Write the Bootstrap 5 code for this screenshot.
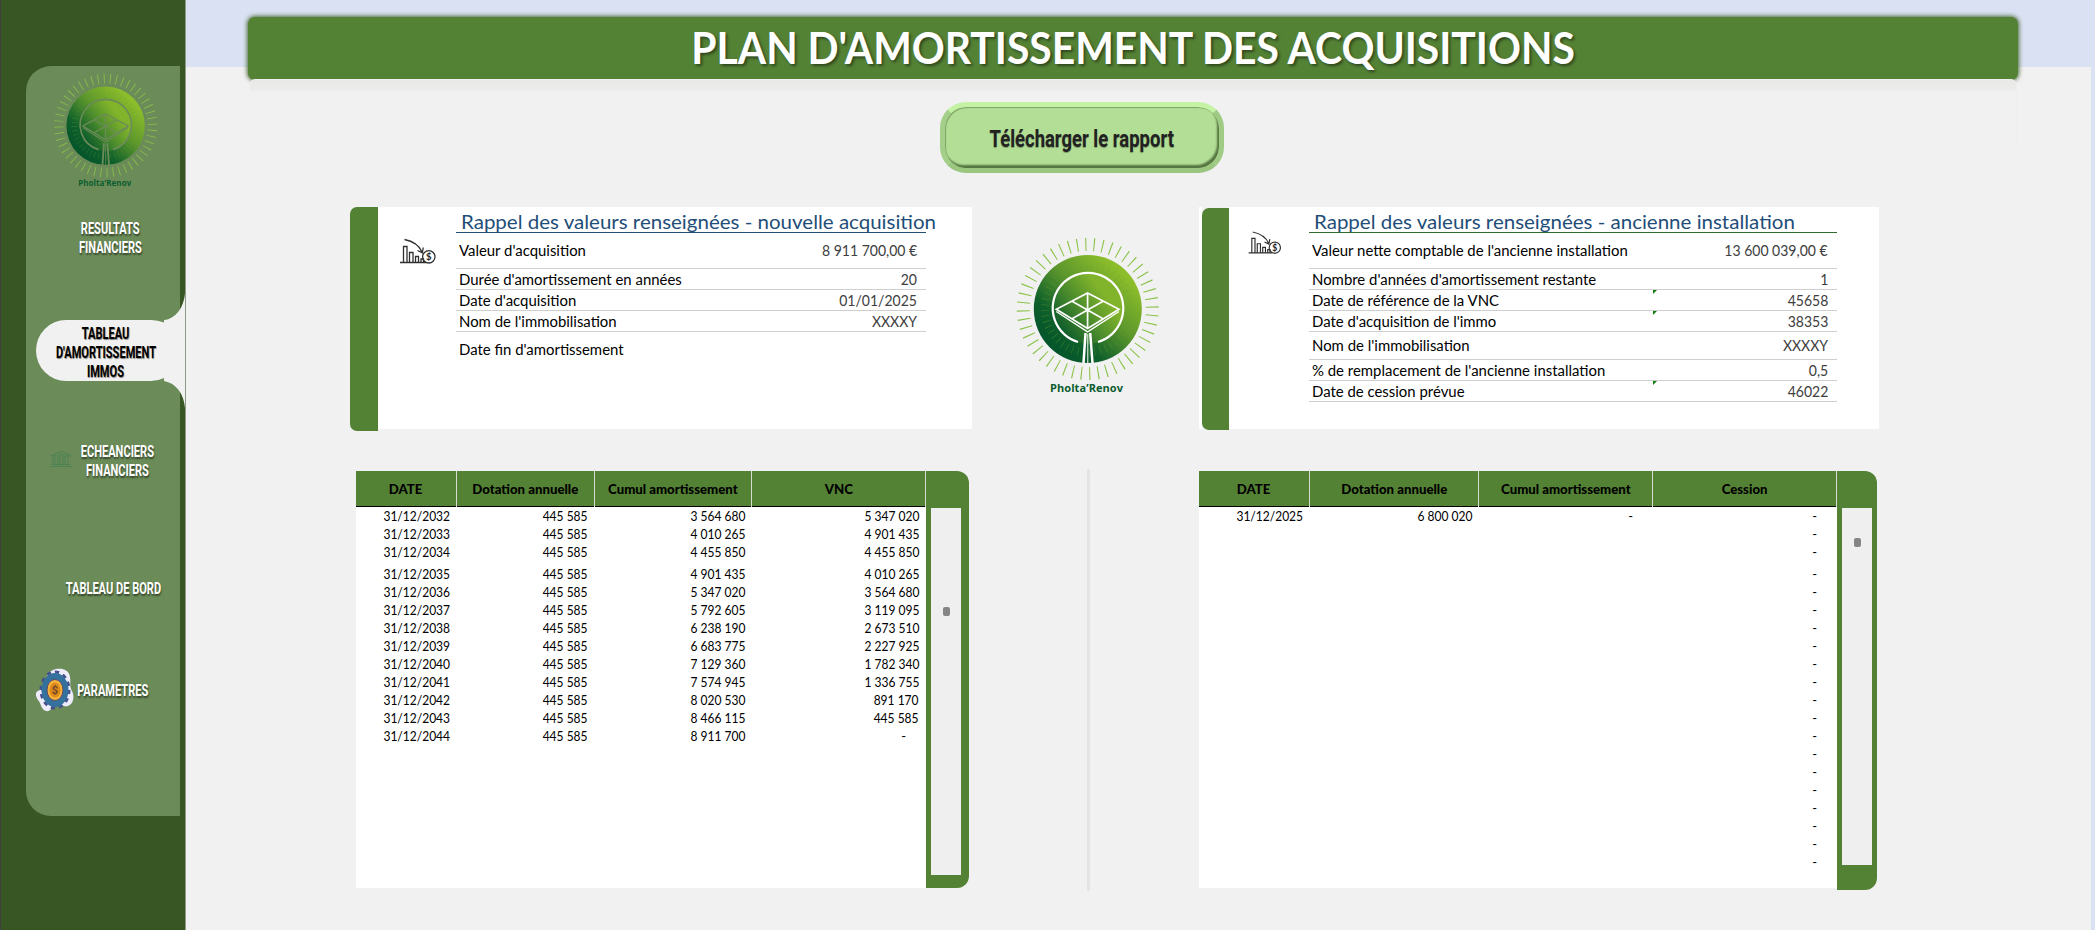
<!DOCTYPE html>
<html lang="fr">
<head>
<meta charset="utf-8">
<title>Plan d'amortissement des acquisitions</title>
<meta name="viewport" content="width=device-width, initial-scale=1">
<link href="https://cdn.jsdelivr.net/npm/bootstrap@5.3.0/dist/css/bootstrap.min.css" rel="stylesheet">
<style>
:root{--green:#548235;--deep:#375623;--soft:#6b8c58;--paper:#f1f1f1;--sky:#d9e1f2}
body{width:2095px;height:930px;overflow:hidden;font-family:Lato,"Open Sans",sans-serif;color:#000;background:var(--paper)}
.fit{display:inline-block;white-space:nowrap;transform:scaleX(var(--k,1));transform-origin:var(--o,0) 50%}
.side{width:186px;height:930px;background:var(--deep);border-left:1px solid #404040;border-right:1px solid #8f9a88;padding:66px 0 0 25px}
.side-panel{width:159px;height:750px;background:linear-gradient(to right,var(--soft) 154px,transparent 154px);border-radius:25px 0 0 25px;color:#fff;font-family:Roboto,sans-serif;font-weight:700}
.entry{height:19px;line-height:19px;font-size:17px;text-shadow:1px 2px 2px rgba(0,0,0,.5);text-align:center;--k:.65;--o:50%}
.entry .fit{margin:0 -60px}
.tab{width:149px;height:115px;margin:36px 0 0 10px;color:#000;padding-top:31px}
.tab .entry{text-shadow:1px 1px 1px rgba(0,0,0,.45)}
.tab-shape{left:0;top:0}
.board{width:1909px;height:930px;background:linear-gradient(var(--sky) 67px,var(--paper) 67px);border-right:4px solid var(--sky);padding-top:17px}
.banner{width:1770px;height:63px;margin-left:62px;background:var(--green);border-radius:7px;box-shadow:0 0 4px 1px #4f6b3c;color:#fff;font-size:43px;font-weight:700;line-height:62px;text-shadow:2px 2px 3px rgba(0,0,0,.45);--o:50%;--k:.95}
.echo{width:1768px;height:70px;margin:-1px 0 -70px 63px;border-radius:6px;background:linear-gradient(#e9e9e7 0,#ebebe9 9px,#f1f1f1 12px);border:1px solid #efefef}
.report{width:284px;height:71px;margin:23px 0 0 754px;border-radius:26px;border:5px solid;border-color:#c4f3a6 #9fcb84 #9bc680 #a3cf88;background:#b2de95;box-shadow:inset -2px -3px 2px #557540,inset 1px 1px 1px #7da263;font:700 24px/64px Roboto,sans-serif;color:#222;--o:50%;--k:.77;text-shadow:0 1px 1px rgba(0,0,0,.3);padding:0}
.report .fit{height:61px}
.cards{margin:34px 0 0 164px;height:224px}
.stripe{background:var(--green);border-radius:7px 0 0 7px}
.sheet{height:222px;background:#fff}
.recap-title{font-size:20px;height:26px;line-height:28px;color:#1f4e79;padding-left:5px;border-bottom:1px solid #1f4e79;--k:1.025}
.recap-title .fit{width:0;height:24px}
.line{height:21px;font-size:14.6px;line-height:22px;border-bottom:1px solid #cfcfcf;padding:0 9px 0 3px;--k:1.022}
.line.tall{height:36px;line-height:36px}
.line.mid{height:28px;line-height:28px}
.line span:last-child{color:#404040}
.line .r{--o:100%;--k:.96}
.flag::before{content:"";position:absolute;left:344px;top:0;border-top:4px solid #107c10;border-right:4px solid transparent}
.grids{margin:40px 0 0 170px;height:420px}
.ledger{height:417px;background:#fff;font-size:13px}
.ledger .h{height:36px;line-height:36px;background:var(--green);border-bottom:1px solid #000;font-weight:700;text-align:center}
.ledger .h>span{border-right:1px solid #d5dccf;--o:50%;--k:1.015}
.ledger .row-l{height:18px;line-height:18px;text-align:right;--o:100%;--k:.925}
.ledger .row-l.gap{height:22px;padding-top:4px}
.c4{display:grid;grid-template-columns:101px 138px 157px 174px}
.c4.b{grid-template-columns:111px 169px 174px 184px}
.c4>span{padding-right:7px}
.h>span{padding-right:0!important}
.dash{display:inline-block;width:5px;margin-right:13px}
#oldLedger .dash{margin-right:13px}
.rail{background:var(--green);border-radius:0 12px 12px 0;padding:37px 0 0 5px}
.track{width:30px;background:#efefef}
.thumb{width:7px;height:9px;border-radius:2px;background:#858585;margin-left:12px}
.split{width:3px;height:422px;background:#e4e4e4;margin:-2px 0 0 118px}
.brand{font:700 11px "Open Sans",sans-serif}
</style>
</head>
<body class="d-flex">
<svg width="0" height="0" class="position-absolute">
<defs>
<linearGradient id="leaf" x1=".15" y1=".85" x2=".8" y2=".15"><stop offset="0" stop-color="#03552b"/><stop offset=".25" stop-color="#0f602b"/><stop offset=".6" stop-color="#5b962c"/><stop offset="1" stop-color="#8cbd2b"/></linearGradient>
<linearGradient id="leaf2" x1=".1" y1=".8" x2=".75" y2=".3"><stop offset="0" stop-color="#0a5a2b"/><stop offset=".5" stop-color="#4b8b2c"/><stop offset="1" stop-color="#82b42b"/></linearGradient>
<symbol id="logo" viewBox="0 0 180 190">
<circle cx="88.8" cy="89" r="64.500" fill="none" stroke="#8bc34a" stroke-width="13" pathLength="480" stroke-dasharray="1.3 8.7" stroke-dashoffset="3"/>
<circle cx="88.8" cy="89" r="54" fill="url(#leaf)"/>
<circle cx="88.8" cy="89" r="43" fill="none" stroke="#6fa52e" stroke-opacity=".5" stroke-width="8" pathLength="480" stroke-dasharray="1 9" stroke-dashoffset="3"/>
<circle cx="88.8" cy="89" r="35" fill="url(#leaf2)"/>
<g fill="none" stroke="currentColor">
<path d="M79 122A35.3 35.3 0 1 1 99 122" stroke-width="2.2"/>
<path d="M88.6 73L120 89.3 88.6 108.5 57.3 89.3ZM72.6 81L104 98.800M104.500 81L73 98.800M88.600 73V108" stroke-width="1.7"/>
<path d="M57.300 91.500L88.600 111.800 120 91.500" stroke-width="1.400"/>
<path d="M86.500 113L84.500 143M91.200 113L93.500 143" stroke-width="2.500"/>
<path d="M88.800 114V143" stroke-width="1"/>
</g>
<text x="87.500" y="171.500" text-anchor="middle" class="brand" fill="#0b5c2e" textLength="73">Pholta’Renov</text>
</symbol>
<symbol id="chart" viewBox="0 0 44 36">
<g fill="none" stroke="#303030" stroke-width="1.300">
<path d="M4 30.500H30M7.500 30V14.500H11V30M13.500 30V20.500H17V30M19.500 30V24.500H22.500V30M25 30V27H27.500V30M8.500 7.500C16 9 23 13 26 20M21.500 18.500L26.300 20.800 27.300 15.500"/>
<circle cx="32.800" cy="24.800" r="6.200"/></g>
<text x="32.800" y="28.200" font-size="9.500" font-weight="700" text-anchor="middle" fill="#222">$</text>
</symbol>
</defs></svg>

<aside class="side flex-shrink-0">
<nav class="side-panel">
<svg class="d-block" style="color:var(--soft)" width="131" height="138" viewBox="0 0 180 190" transform="translate(15 -5)"><use href="#logo"/></svg>
<div style="height:15px"></div>
<div style="padding-left:10px"><div class="entry"><span class="fit">RESULTATS</span></div>
<div class="entry"><span class="fit">FINANCIERS</span></div></div>
<div class="tab position-relative">
<svg class="tab-shape position-absolute" width="149" height="115" viewBox="0 0 149 115"><path fill="#f1f1f1" d="M30 27H115Q122 27 128 29.500V27C140 26 148 14 149 0V115C148 101 140 90 128 88V85Q122 88 115 88H30A30 30.500 0 0 1 30 27Z"/></svg>
<div class="position-relative" style="margin-right:10px">
<div class="entry"><span class="fit">TABLEAU</span></div>
<div class="entry"><span class="fit">D'AMORTISSEMENT</span></div>
<div class="entry"><span class="fit">IMMOS</span></div>
</div></div>
<div class="d-flex" style="margin-top:34px;padding-left:24px">
<svg width="22" height="18" viewBox="0 0 22 18" class="mt-2" fill="none" stroke="#4b8153"><path d="M1 6L11 1 21 6ZM3 7V14M5 7V14M8 7V14M10 7V14M13 7V14M15 7V14M18 7V14M2 14.500H20M0 16.500H22M9 4H13"/></svg>
<div style="width:90px"><div class="entry"><span class="fit">ECHEANCIERS</span></div><div class="entry"><span class="fit">FINANCIERS</span></div></div>
</div>
<div class="entry" style="margin-top:99px;padding-left:16px"><span class="fit">TABLEAU DE BORD</span></div>
<div class="d-flex align-items-center" style="margin-top:68px;padding-left:9px">
<svg width="40" height="48" viewBox="0 0 40 48"><path fill="#eeecfb" d="M13 8C17 1 34 0 35 11C36 17 34 20 37 25C41 34 36 42 28 40L20 38C17 42 15 46 11 45C6 44 6 37 3 34C-1 28 1 24 7 24Z"/><ellipse cx="20" cy="24" rx="14" ry="18" fill="none" stroke="#46508c" stroke-width="3" pathLength="120" stroke-dasharray="5 5"/><ellipse cx="20" cy="24" rx="13.500" ry="17" fill="#34719c"/><ellipse cx="20" cy="24" rx="8" ry="10.500" fill="#f6b23c" stroke="#5d4a6a"/><ellipse cx="20" cy="24" rx="5.500" ry="7.500" fill="#dd8a18"/><text x="20" y="28" font-size="11" text-anchor="middle" fill="#70452c">$</text></svg>
<div class="entry" style="width:75px"><span class="fit">PARAMETRES</span></div>
</div>
</nav>
</aside>

<main class="board flex-shrink-0">
<h1 class="banner mb-0 text-center"><span class="fit">PLAN D'AMORTISSEMENT DES ACQUISITIONS</span></h1>
<div class="echo"></div>
<button class="report d-block position-relative"><span class="fit">Télécharger le rapport</span></button>

<section class="cards d-flex">
<div class="stripe" style="width:28px"></div>
<div class="sheet d-flex" style="width:594px">
<svg width="44" height="36" style="margin:25px 16px 0 18px"><use href="#chart"/></svg>
<div style="width:470px" id="newRecap"><div class="recap-title"><span class="fit">Rappel des valeurs renseignées - nouvelle acquisition</span></div></div>
</div>
<svg width="180" height="190" style="margin:13px 20px 0 27px;color:#fff"><use href="#logo"/></svg>
<div class="bg-white" style="width:3px;height:222px"></div>
<div class="stripe" style="width:27px;height:222px;margin-top:1px"></div>
<div class="sheet d-flex" style="width:650px">
<svg width="40" height="33" viewBox="0 0 44 36" style="margin:18px 24px 0 16px"><use href="#chart"/></svg>
<div style="width:528px" id="oldRecap"><div class="recap-title" style="border-color:#2f6b2f"><span class="fit">Rappel des valeurs renseignées - ancienne installation</span></div></div>
</div>
</section>

<section class="grids d-flex">
<div class="ledger" id="newLedger" style="width:570px"><div class="h c4"><span><b class="fit">DATE</b></span><span><b class="fit">Dotation annuelle</b></span><span><b class="fit">Cumul amortissement</b></span><span><b class="fit">VNC</b></span></div></div>
<div class="rail" style="width:43px;height:417px"><div class="track" style="height:367px;padding-top:99px"><div class="thumb"></div></div></div>
<div class="split"></div>
<div class="ledger" id="oldLedger" style="width:638px;margin-left:109px"><div class="h c4 b"><span><b class="fit">DATE</b></span><span><b class="fit">Dotation annuelle</b></span><span><b class="fit">Cumul amortissement</b></span><span><b class="fit">Cession</b></span></div></div>
<div class="rail" style="width:40px;height:419px"><div class="track" style="height:357px;padding-top:30px"><div class="thumb"></div></div></div>
</section>
</main>
<script>
const add=(id,html)=>document.getElementById(id).insertAdjacentHTML('beforeend',html);
const line=([label,value,cls=''])=>`<div class="line position-relative d-flex justify-content-between ${cls}"><span class="fit">${label}</span><span class="fit r">${value}</span></div>`;
add('newRecap',[["Valeur d'acquisition","8 911 700,00 €","tall"],["Durée d'amortissement en années","20"],["Date d'acquisition","01/01/2025"],["Nom de l'immobilisation","XXXXY"],["Date fin d'amortissement","","tall border-0"]].map(line).join(''));
add('oldRecap',[["Valeur nette comptable de l'ancienne installation","13 600 039,00 €","tall"],["Nombre d'années d'amortissement restante","1"],["Date de référence de la VNC","45658","flag"],["Date d'acquisition de l'immo","38353","flag"],["Nom de l'immobilisation","XXXXY","mid"],["% de remplacement de l'ancienne installation","0,5"],["Date de cession prévue","46022","flag"]].map(line).join(''));
const fmt=n=>String(n).replace(/\B(?=(\d{3})+$)/g,' ');
const row=(cells,i,b)=>`<div class="row-l c4 ${b} ${i==3?'gap':''}">${cells.map(c=>`<span>${c=='-'?'<span class="dash">-</span>':`<span class="fit">${c}</span>`}</span>`).join('')}</div>`;
let out='';
for(let i=0;i<13;i++){const c=445585*(8+i);out+=row(['31/12/'+(2032+i),'445 585',fmt(c),i==12?'-':fmt(8911700-c)],i,'');}
add('newLedger',out);
out=row(['31/12/2025','6 800 020','-','-'],0,'b');
for(let i=1;i<20;i++)out+=row(['','','','-'],i,'b');
add('oldLedger',out);
</script>
<script src="https://cdn.jsdelivr.net/npm/bootstrap@5.3.0/dist/js/bootstrap.bundle.min.js"></script>
</body>
</html>
